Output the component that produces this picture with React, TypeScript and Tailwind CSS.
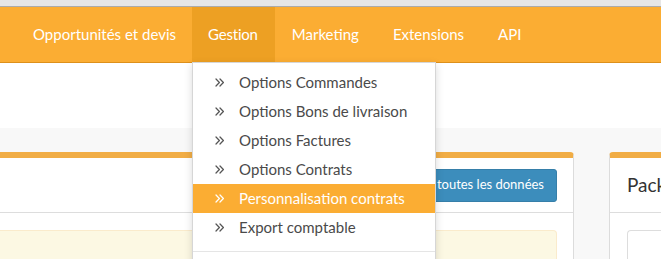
import React from "react";

const Chevron = ({ className }: { className?: string }) => (
  <svg width="9" height="9" viewBox="0 0 9 9" className={className} fill="none" stroke="currentColor" strokeWidth="1.25" strokeLinecap="round" strokeLinejoin="round">
    <path d="M1 1 L4.4 4.5 L1 8" />
    <path d="M5 1 L8.4 4.5 L5 8" />
  </svg>
);

const items = [
  "Options Commandes",
  "Options Bons de livraison",
  "Options Factures",
  "Options Contrats",
  "Personnalisation contrats",
  "Export comptable",
];

export default function App() {
  return (
    <div className="h-[259px] w-[661px] overflow-hidden bg-white" style={{ fontFamily: "Lato, 'Noto Sans', sans-serif" }}>
      <div className="h-[7px] bg-[#e6e6e6] border-b border-[#ababab]" />
      <nav className="relative z-20 flex h-[56px] bg-[#fbad33] border-b border-[#dd901c] pl-4 text-[15px] text-white">
        <div className="flex items-center pl-[17px] pr-[16px]">Opportunités et devis</div>
        <div className="relative flex items-center bg-[#eda023] pl-[16px] pr-[17px]">
          <span className="tracking-[-0.2px]">Gestion</span>
          <div className="absolute left-0 top-[55px] h-[220px] w-[244px] border border-[#d6d6d6] bg-white pt-[5px] shadow-[0_3px_8px_rgba(0,0,0,0.15)]">
            {items.map((t, i) => (
              <div
                key={t}
                className={
                  "flex h-[29px] items-center pl-[22px] " +
                  (i === 4 ? "bg-[#fbad33] text-white" : "text-[#4a4a4a]")
                }
              >
                <Chevron className={i === 4 ? "text-white" : "text-[#555]"} />
                <span className="ml-[15px]">{t}</span>
              </div>
            ))}
            <div className="mt-[9px] h-px bg-[#e5e5e5]" />
          </div>
        </div>
        <div className="flex items-center px-[17px]">Marketing</div>
        <div className="flex items-center px-[17px]">Extensions</div>
        <div className="flex items-center px-[17px]">API</div>
      </nav>
      <div className="h-[65px] bg-white" />
      <div className="flex gap-[35px] bg-[#f8f8f8] pt-[24px] h-[200px]">
        <div className="w-[574px] shrink-0 rounded-tr-[4px] border-r border-b border-[#dcdcdc] border-t-[6px] border-t-[#f1ad45] bg-white">
          <div className="flex h-[55px] items-center justify-end border-b border-[#dddddd] pr-[16px]">
            <button className="h-[33px] rounded-[3px] bg-[#3c8dbc] px-[12px] text-[13px] text-white border border-[#367fa9]">
              Exporter toutes les données
            </button>
          </div>
          <div className="pt-[17px] pr-[16px]">
            <div className="h-[60px] rounded-r-[4px] border border-l-0 border-[#faebcc] bg-[#fcf8e3]" />
          </div>
        </div>
        <div className="flex-1 rounded-tl-[4px] border-l border-b border-[#dcdcdc] border-t-[6px] border-t-[#f1ad45] bg-white">
          <div className="flex h-[55px] items-center border-b border-[#dddddd] pl-[17px] text-[19px] text-[#333] whitespace-nowrap">
            Pack
          </div>
          <div className="pt-[17px] pl-[17px]">
            <div className="h-[60px] rounded-l-[4px] border border-r-0 border-[#dddddd] bg-white" />
          </div>
        </div>
      </div>
    </div>
  );
}
